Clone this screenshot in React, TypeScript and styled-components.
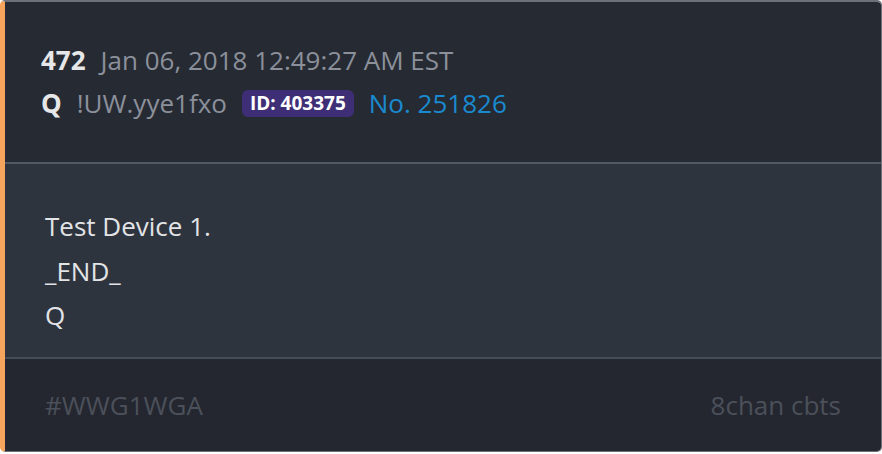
import React from "react";
import styled, { createGlobalStyle } from "styled-components";

const Global = createGlobalStyle`
  html, body { margin: 0; padding: 0; background: #ffffff; }
  body { font-family: "Open Sans", "Noto Sans", sans-serif; }
`;

const Card = styled.div`
  box-sizing: border-box;
  width: 882px;
  height: 452px;
  border: 1px solid #6c7078;
  border-top-width: 2px;
  border-left: 5px solid #f7a55c;
  border-radius: 5px;
  overflow: hidden;
  display: flex;
  flex-direction: column;
`;

const Header = styled.div`
  background: #262a33;
  height: 162px;
  flex: none;
  box-sizing: border-box;
  padding: 37px 0 0 36px;
  border-bottom: 2px solid #535964;
  font-size: 26px;
  line-height: 43px;
`;

const Row = styled.div`
  display: flex;
  align-items: center;
  gap: 15px;
  white-space: nowrap;
`;

const Strong = styled.span`
  font-weight: 700;
  color: #e6e7e9;
`;

const Muted = styled.span`
  color: #8b909a;
`;

const Badge = styled.span`
  background: #3e2e76;
  color: #ffffff;
  font-weight: 700;
  font-size: 19px;
  line-height: 27px;
  padding: 0 8px;
  border-radius: 6px;
`;

const Link = styled.span`
  color: #1a8ad0;
`;

const Body = styled.div`
  background: #2e343e;
  height: 195px;
  flex: none;
  box-sizing: border-box;
  padding: 40px 0 0 40px;
  border-bottom: 2px solid #474d57;
  color: #e2e4e7;
  font-size: 26px;
  line-height: 44.5px;
`;

const Line = styled.div``;

const Footer = styled.div`
  background: #24272f;
  flex: 1;
  display: flex;
  align-items: center;
  justify-content: space-between;
  padding: 0 40px 0 40px;
  color: #4b505a;
  font-size: 26px;
`;

export default function App() {
  return (
    <>
      <Global />
      <Card>
        <Header>
          <Row>
            <Strong>472</Strong>
            <Muted>Jan 06, 2018 12:49:27 AM EST</Muted>
          </Row>
          <Row>
            <Strong>Q</Strong>
            <Muted>!UW.yye1fxo</Muted>
            <Badge>ID: 403375</Badge>
            <Link>No. 251826</Link>
          </Row>
        </Header>
        <Body>
          <Line>Test Device 1.</Line>
          <Line>_END_</Line>
          <Line>Q</Line>
        </Body>
        <Footer>
          <span>#WWG1WGA</span>
          <span>8chan cbts</span>
        </Footer>
      </Card>
    </>
  );
}
